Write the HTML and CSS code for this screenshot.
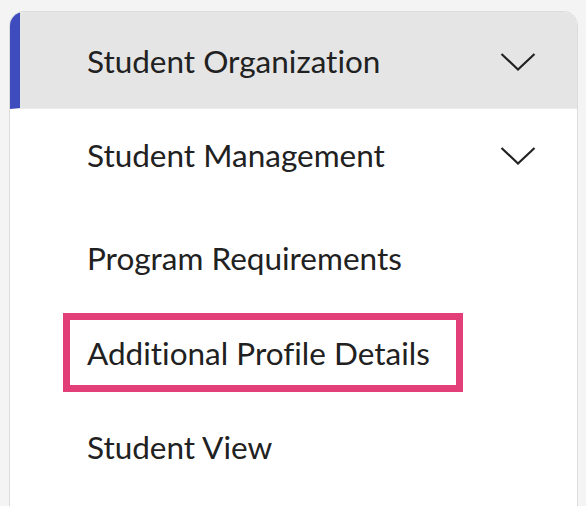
FILE: index.html
```html
<!DOCTYPE html>
<html lang="en">
<head>
<meta charset="utf-8">
<title>Menu</title>
<link rel="stylesheet" href="styles.css">
</head>
<body>
<nav class="menu">
  <div class="item active">
    <span class="label">Student Organization</span>
    <svg class="chev" width="36" height="20" viewBox="0 0 36 20"><path d="M1.5 2 L18 17.5 L34.5 2" fill="none" stroke="#222" stroke-width="2.2"/></svg>
  </div>
  <div class="item mgmt">
    <span class="label">Student Management</span>
    <svg class="chev" width="36" height="20" viewBox="0 0 36 20"><path d="M1.5 2 L18 17.5 L34.5 2" fill="none" stroke="#222" stroke-width="2.2"/></svg>
  </div>
  <div class="item reqs">
    <span class="label">Program Requirements</span>
  </div>
  <div class="item details">
    <span class="label">Additional Profile Details</span>
    <span class="callout"></span>
  </div>
  <div class="item view">
    <span class="label">Student View</span>
  </div>
</nav>
</body>
</html>
```
FILE: styles.css
```css
html, body {
  margin: 0;
  padding: 0;
  background: #f4f4f4;
}
body {
  padding: 11px 0 0 9px;
  height: 506px;
  box-sizing: border-box;
  overflow: hidden;
  font-family: "Lato", "Open Sans", sans-serif;
}
.menu {
  width: 567px;
  height: 495px;
  background: #fff;
  border: 1px solid #dcdcdc;
  border-bottom: none;
  border-radius: 15px 15px 0 0;
  overflow: hidden;
  display: flex;
  flex-direction: column;
  box-sizing: content-box;
}
.item {
  position: relative;
  box-sizing: border-box;
  display: flex;
  align-items: flex-start;
  justify-content: space-between;
  flex: none;
  padding: 26px 41px 0 67px;
  border-left: 10px solid #fff;
  color: #212121;
  font-size: 31.5px;
  line-height: 40px;
  font-variant-ligatures: none;
}
.item.active {
  height: 97px;
  padding-top: 29px;
  background: #e5e5e5;
  border-left-color: #3e4cbd;
  border-bottom: 1px solid #ececec;
}
.item.mgmt { height: 103px; }
.item.reqs { height: 95px; }
.item.details { height: 94px; }
.item.view { flex: 1; }
.chev {
  display: block;
  margin-top: 11px;
}
.callout {
  position: absolute;
  left: 43px;
  top: 6px;
  width: 386px;
  height: 65px;
  border: 7px solid #e23e78;
}
```
